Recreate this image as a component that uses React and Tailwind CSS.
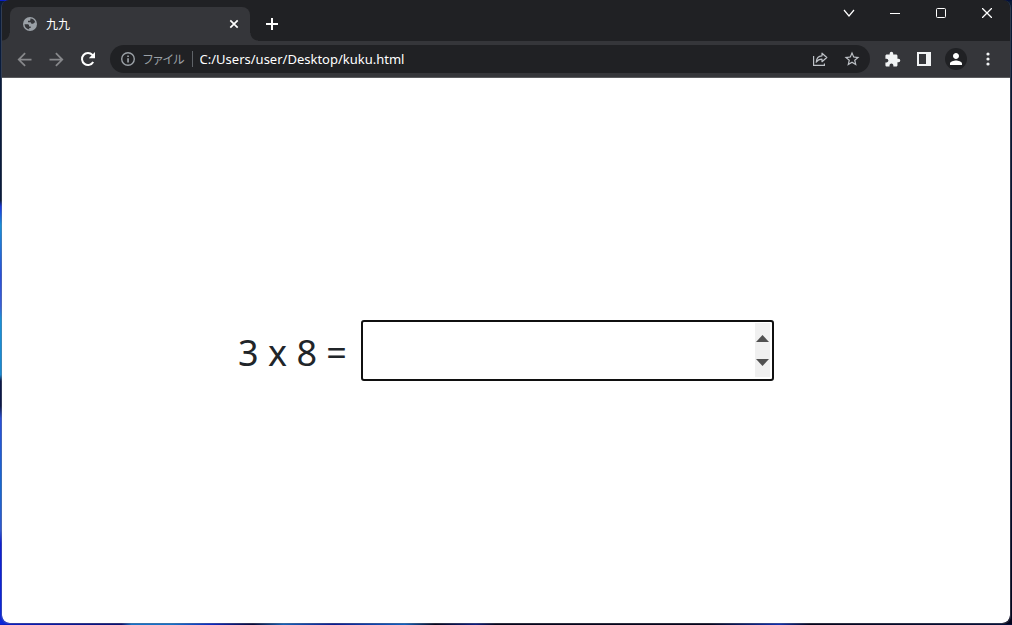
import { useRef } from "react";
import { MdArrowBack, MdArrowForward, MdExtension, MdStarBorder, MdPerson } from "react-icons/md";

function GlobeIcon() {
  return (
    <svg width="14" height="14" viewBox="0 0 14 14" aria-hidden="true">
      <circle cx="7" cy="7" r="7" fill="#9aa0a6" />
      <path
        d="M1.500 7.300h2.900c1.200 0 1.700.6 1.700 1.600v.5h1.600v1.700H6.200v1.300A5.500 5.500 0 0 1 1.500 7.300zM7.400 1.500v1.200c0 .7-.5 1.100-1.200 1.100H5v1.500h1.900c1 0 1.300.6 1.500 1.500h1.400c1 0 1.200-.6 1.500-1.200l1-.2A5.600 5.600 0 0 0 7.400 1.500z"
        fill="#35363a"
      />
    </svg>
  );
}

function ReloadIcon() {
  return (
    <svg width="16" height="16" viewBox="0 0 16 16" fill="none" aria-hidden="true">
      <path d="M13.200 11A6 6 0 1 1 12.400 3.900L14 5.500" stroke="#fff" strokeWidth="2" />
      <path d="M15 1v6.200H8.800z" fill="#fff" />
    </svg>
  );
}

function InfoIcon() {
  return (
    <svg width="14" height="14" viewBox="0 0 14 14" aria-hidden="true">
      <circle cx="7" cy="7" r="6.300" fill="none" stroke="#9aa0a6" strokeWidth="1.400" />
      <path d="M6.200 6.200h1.700v4.300H6.200zM6.200 3.400h1.700V5H6.200z" fill="#9aa0a6" />
    </svg>
  );
}

function ShareIcon() {
  return (
    <svg width="16" height="16" viewBox="0 0 16 16" fill="none" stroke="#bdc1c6" strokeWidth="1.200" aria-hidden="true">
      <path d="M1.600 5v9.400h10.800v-2" />
      <path d="M4.200 11.200C4.500 7.300 6.500 4.900 10 4.800V2.200l4.800 4.300-4.800 4.200V8.200C7.400 8.200 5.600 9.100 4.200 11.200z" strokeLinejoin="round" />
    </svg>
  );
}

function SidePanelIcon() {
  return (
    <svg width="14" height="14" viewBox="0 0 14 14" aria-hidden="true">
      <path d="M0 0h14v14H0zM2 2v10h7V2z" fill="#f1f3f4" fillRule="evenodd" />
    </svg>
  );
}

function MenuIcon() {
  return (
    <svg width="4" height="14" viewBox="0 0 4 14" fill="#f1f3f4" aria-hidden="true">
      <circle cx="2" cy="2" r="1.600" />
      <circle cx="2" cy="7" r="1.600" />
      <circle cx="2" cy="12" r="1.600" />
    </svg>
  );
}

function LineIcon({ d, size, width }) {
  return (
    <svg width={size} height={size} viewBox={`0 0 ${size} ${size}`} fill="none" stroke="#fff" strokeWidth={width} aria-hidden="true">
      <path d={d} />
    </svg>
  );
}

function ToolButton({ label, children }) {
  return (
    <button type="button" aria-label={label} className="flex h-7 w-8 shrink-0 items-center justify-center">
      {children}
    </button>
  );
}

function WindowButton({ label, children }) {
  return (
    <button type="button" aria-label={label} className="flex h-[26px] w-[46px] items-center justify-center">
      {children}
    </button>
  );
}

function TabStrip() {
  return (
    <header className="flex h-[41px] justify-between bg-[#202124]">
      <div className="flex items-end pl-2">
        <div className="relative flex h-[34px] w-60 items-center rounded-t-lg bg-[#35363a] pr-2 pl-[13px]">
          <span className="absolute right-full bottom-0 size-2 bg-[radial-gradient(circle_at_0_0,#202124_7px,#35363a_8px)]" />
          <span className="absolute bottom-0 left-full size-2 bg-[radial-gradient(circle_at_100%_0,#202124_7px,#35363a_8px)]" />
          <GlobeIcon />
          <span className="ml-[9px] flex-1 pt-0.5 text-xs text-white">九九</span>
          <button type="button" aria-label="タブを閉じる" className="flex size-4 items-center justify-center">
            <LineIcon size={10} width={1.7} d="M1.300 1.300L8.700 8.700M8.700 1.300L1.300 8.700" />
          </button>
        </div>
        <button type="button" aria-label="新しいタブ" className="ml-2 flex h-[34px] w-7 items-center justify-center">
          <LineIcon size={12} width={2} d="M6 0v12M0 6h12" />
        </button>
      </div>
      <div className="flex">
        <WindowButton label="タブを検索">
          <LineIcon size={12} width={1.2} d="M1 3l5 6 5-6" />
        </WindowButton>
        <WindowButton label="最小化">
          <LineIcon size={10} width={1} d="M0 5.500h10" />
        </WindowButton>
        <WindowButton label="最大化">
          <svg width="10" height="10" viewBox="0 0 10 10" fill="none" stroke="#fff" aria-hidden="true">
            <rect x="0.5" y="0.5" width="9" height="9" rx="1" />
          </svg>
        </WindowButton>
        <WindowButton label="閉じる">
          <LineIcon size={10} width={1.3} d="M0 0l10 10M10 0L0 10" />
        </WindowButton>
      </div>
    </header>
  );
}

function Toolbar() {
  return (
    <nav className="flex h-[37px] items-center border-b border-[#5a5b5e] bg-[#35363a] px-1.5">
      <ToolButton label="戻る">
        <MdArrowBack size={21} color="#87888b" />
      </ToolButton>
      <ToolButton label="進む">
        <MdArrowForward size={21} color="#87888b" />
      </ToolButton>
      <ToolButton label="再読み込み">
        <ReloadIcon />
      </ToolButton>
      <div className="mx-1.5 flex h-7 min-w-0 flex-1 items-center rounded-full bg-[#202124] pr-0.5 pl-[11px]">
        <InfoIcon />
        <label htmlFor="address" className="ml-2 pt-0.5 text-xs whitespace-nowrap text-[#9aa0a6] [font-feature-settings:'palt']">
          ファイル
        </label>
        <span className="mx-[7px] h-4 w-px bg-[#5f6368]" />
        <input
          id="address"
          type="text"
          defaultValue="C:/Users/user/Desktop/kuku.html"
          className="min-w-0 flex-1 bg-transparent pt-0.5 text-[13px] text-white outline-none"
        />
        <ToolButton label="共有">
          <ShareIcon />
        </ToolButton>
        <ToolButton label="ブックマーク">
          <MdStarBorder size={18} color="#bdc1c6" />
        </ToolButton>
      </div>
      <ToolButton label="拡張機能">
        <MdExtension size={17} color="#f1f3f4" />
      </ToolButton>
      <ToolButton label="サイドパネル">
        <SidePanelIcon />
      </ToolButton>
      <ToolButton label="プロフィール">
        <span className="flex size-[22px] items-center justify-center rounded-full bg-[#202124]">
          <MdPerson size={18} color="#fff" />
        </span>
      </ToolButton>
      <ToolButton label="メニュー">
        <MenuIcon />
      </ToolButton>
    </nav>
  );
}

function Quiz() {
  const answer = useRef(null);
  return (
    <main className="flex flex-1 items-center justify-center rounded-b-lg bg-white">
      <form className="flex items-center gap-3.5" onSubmit={(e) => e.preventDefault()}>
        <label htmlFor="answer" className="pt-1 text-4xl whitespace-nowrap text-[#212529]">
          3 x 8 =
        </label>
        <div className="flex h-[61px] w-[413px] items-center rounded-[3px] border-2 border-[#101010] px-0.5 pt-px pb-0.5">
          <input
            id="answer"
            ref={answer}
            type="number"
            className="h-full min-w-0 flex-1 appearance-none bg-white text-4xl text-[#212529] outline-none [-moz-appearance:textfield] [&::-webkit-inner-spin-button]:appearance-none"
          />
          <div className="flex h-full w-[15px] flex-col items-center justify-center bg-[#f0f0f0]">
            <button type="button" aria-label="増やす" className="flex h-6 items-center" onClick={() => answer.current.stepUp()}>
              <svg width="13" height="7" viewBox="0 0 13 7" fill="#505050" aria-hidden="true">
                <path d="M0 7L6.500 0 13 7z" />
              </svg>
            </button>
            <button type="button" aria-label="減らす" className="flex h-6 items-center" onClick={() => answer.current.stepDown()}>
              <svg width="13" height="7" viewBox="0 0 13 7" fill="#505050" aria-hidden="true">
                <path d="M0 0h13L6.500 7z" />
              </svg>
            </button>
          </div>
        </div>
      </form>
    </main>
  );
}

const desktop =
  "[background:linear-gradient(#0a1c3c_0_32%,#1838e0_33%,#1a8fd8_36%,#2a50d8_44%,#3a60d8_49%,#1a90d8_51%,#1a88d0_60%,#0c1848_61%_65%,#2a50d8_67%,#1868d0_78%,#3058d0_85%,#1020d0_87%,#0c28d8)_left/10px_calc(100%-2px)_no-repeat,linear-gradient(#0a1a34,#041030_70%,#02041c)_right/10px_calc(100%-2px)_no-repeat,linear-gradient(90deg,#0c20c8,#081070_12%,#1470c8_13%,#1470c8_17%,#0c28c0_21%,#060838_25%,#1460b8_28%,#0a1a90_33%,#1060c0_40%,#05051c_43%,#0c1c80_47%,#05051c_49%,#04041c_70%,#1030b0_77%,#04041c_80%,#04103c)]";

export default function App() {
  return (
    <div
      className={`flex min-h-screen flex-col px-px pb-px font-['Noto_Sans','Noto_Sans_CJK_JP',sans-serif] ${desktop}`}
    >
      <div className="flex flex-1 flex-col overflow-hidden rounded-lg border-x border-b border-[#80808055]">
        <TabStrip />
        <Toolbar />
        <Quiz />
      </div>
    </div>
  );
}
